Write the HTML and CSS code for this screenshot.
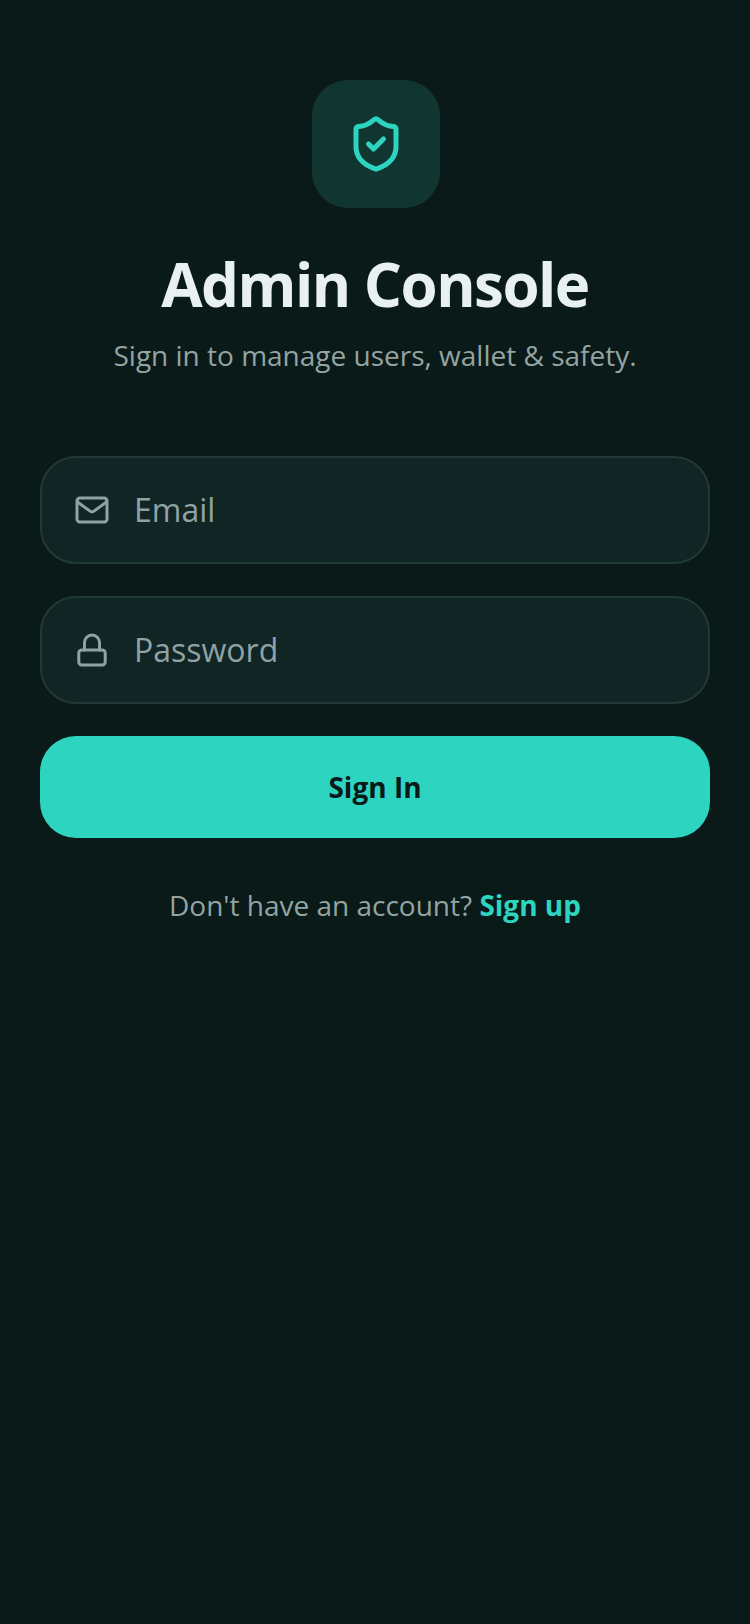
FILE: index.html
```html
<!DOCTYPE html>
<html lang="en">
<head>
<meta charset="utf-8">
<title>Admin Console</title>
<link rel="stylesheet" href="styles.css">
</head>
<body>
<main class="screen">
  <div class="logo">
    <svg class="logo-icon" viewBox="0 0 24 24" fill="none" stroke="currentColor" stroke-width="2" stroke-linecap="round" stroke-linejoin="round">
      <path d="M20 13c0 5-3.5 7.5-7.66 8.95a1 1 0 0 1-.67-.01C7.5 20.5 4 18 4 13V6a1 1 0 0 1 1-1c2 0 4.5-1.2 6.24-2.72a1.17 1.17 0 0 1 1.52 0C14.51 3.81 17 5 19 5a1 1 0 0 1 1 1z"/>
      <path d="m9 12 2 2 4-4"/>
    </svg>
  </div>
  <h1 class="title">Admin Console</h1>
  <p class="subtitle">Sign in to manage users, wallet &amp; safety.</p>
  <form class="form">
    <div class="field">
      <svg class="field-icon" viewBox="0 0 24 24" fill="none" stroke="currentColor" stroke-width="2" stroke-linecap="round" stroke-linejoin="round">
        <rect x="2" y="4" width="20" height="16" rx="2"/>
        <path d="M2.5 6.8l8.4 6.1a2 2 0 0 0 2.2 0l8.4-6.1"/>
      </svg>
      <span class="placeholder">Email</span>
    </div>
    <div class="field">
      <svg class="field-icon" viewBox="0 0 24 24" fill="none" stroke="currentColor" stroke-width="2" stroke-linecap="round" stroke-linejoin="round">
        <rect x="3.2" y="12" width="17.6" height="10" rx="2"/>
        <path d="M7 12V7a5 5 0 0 1 10 0v5"/>
      </svg>
      <span class="placeholder">Password</span>
    </div>
    <button class="submit" type="button">Sign In</button>
  </form>
  <p class="footer">Don't have an account? <a class="link">Sign up</a></p>
</main>
</body>
</html>
```
FILE: styles.css
```css
* { box-sizing: border-box; }
html, body { margin: 0; height: 100%; }
body {
  background: #0a1a19;
  font-family: "Open Sans", sans-serif;
}
.screen {
  display: flex;
  flex-direction: column;
  align-items: center;
  min-height: 1624px;
  padding: 80px 40px 0;
}
.logo {
  width: 128px;
  height: 128px;
  margin-left: 2px;
  border-radius: 36px;
  background: #113530;
  color: #2dd4bf;
  display: flex;
  align-items: center;
  justify-content: center;
}
.logo-icon { width: 60px; height: 60px; }
.title {
  margin: 40px 0 0;
  font-size: 60px;
  line-height: 72px;
  font-weight: 700;
  letter-spacing: -1.5px;
  color: #e8f1ef;
}
.subtitle {
  margin: 15px 0 0;
  font-size: 28px;
  line-height: 40px;
  color: #93a4a2;
}
.form {
  width: 100%;
  margin-top: 81px;
  display: flex;
  flex-direction: column;
  gap: 32px;
}
.field {
  height: 108px;
  border: 2px solid #213a38;
  border-radius: 36px;
  background: #112524;
  display: flex;
  align-items: center;
  gap: 24px;
  padding: 0 32px;
  color: #8fa3a3;
}
.field-icon { width: 36px; height: 36px; flex: none; }
.placeholder { font-size: 32px; line-height: 44px; color: #8fa2a5; }
.submit {
  height: 102px;
  border: 0;
  border-radius: 36px;
  background: #2dd4bf;
  color: #0a1a19;
  font: 700 28px "Open Sans", sans-serif;
}
.footer {
  margin: 47px 0 0;
  font-size: 28px;
  line-height: 40px;
  color: #93a4a2;
}
.link { font-weight: 700; color: #2dd4bf; }
```
